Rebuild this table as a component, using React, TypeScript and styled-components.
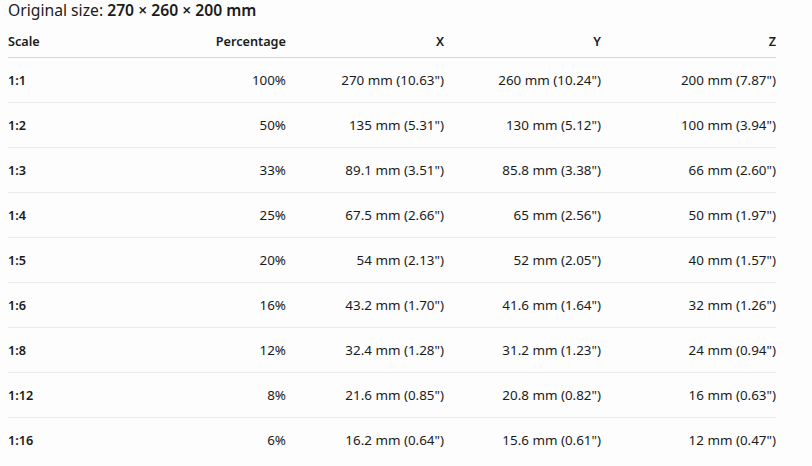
import React from "react";
import styled, { createGlobalStyle } from "styled-components";

const Global = createGlobalStyle`
  html, body { margin: 0; padding: 0; background: #fdfdfd; }
  body { font-family: "Noto Sans", "Open Sans", sans-serif; color: #1b1b1b; }
`;

const Page = styled.div`
  padding: 0 8px;
`;

const Title = styled.div`
  font-size: 15.7px;
  line-height: 20px;
  height: 20px;
`;

const Strong = styled.span`
  font-weight: 600;
`;

const Table = styled.table`
  width: 768px;
  table-layout: fixed;
  border-collapse: collapse;
  font-size: 13.4px;
  line-height: 20px;
`;

const Th = styled.th<{ $align?: "left" | "right"; $last?: boolean }>`
  font-size: 12.7px;
  font-weight: 600;
  text-align: ${(p) => p.$align ?? "right"};
  padding: 11px ${(p) => (p.$last || p.$align === "left" ? "0" : "16px")} 6px 0;
  border-bottom: 1px solid #d6d6d6;
  white-space: nowrap;
`;

const Tr = styled.tr`
  & + & td {
    border-top: 1px solid #ebebeb;
  }
`;

const Td = styled.td<{ $align?: "left" | "right"; $last?: boolean; $bold?: boolean }>`
  text-align: ${(p) => p.$align ?? "right"};
  font-weight: ${(p) => (p.$bold ? 600 : 400)};
  font-size: ${(p) => (p.$bold ? "12.7px" : "inherit")};
  padding: 12px ${(p) => (p.$last || p.$align === "left" ? "0" : "16px")} 12px 0;
  white-space: nowrap;
`;

const rows: [string, string, string, string, string][] = [
  ["1:1", "100%", '270 mm (10.63")', '260 mm (10.24")', '200 mm (7.87")'],
  ["1:2", "50%", '135 mm (5.31")', '130 mm (5.12")', '100 mm (3.94")'],
  ["1:3", "33%", '89.1 mm (3.51")', '85.8 mm (3.38")', '66 mm (2.60")'],
  ["1:4", "25%", '67.5 mm (2.66")', '65 mm (2.56")', '50 mm (1.97")'],
  ["1:5", "20%", '54 mm (2.13")', '52 mm (2.05")', '40 mm (1.57")'],
  ["1:6", "16%", '43.2 mm (1.70")', '41.6 mm (1.64")', '32 mm (1.26")'],
  ["1:8", "12%", '32.4 mm (1.28")', '31.2 mm (1.23")', '24 mm (0.94")'],
  ["1:12", "8%", '21.6 mm (0.85")', '20.8 mm (0.82")', '16 mm (0.63")'],
  ["1:16", "6%", '16.2 mm (0.64")', '15.6 mm (0.61")', '12 mm (0.47")'],
];

export default function App() {
  return (
    <Page>
      <Global />
      <Title>
        Original size: <Strong>270 × 260 × 200 mm</Strong>
      </Title>
      <Table>
        <colgroup>
          <col style={{ width: 142 }} />
          <col style={{ width: 152 }} />
          <col style={{ width: 158 }} />
          <col style={{ width: 157 }} />
          <col style={{ width: 159 }} />
        </colgroup>
        <thead>
          <tr>
            <Th $align="left">Scale</Th>
            <Th>Percentage</Th>
            <Th>X</Th>
            <Th>Y</Th>
            <Th $last>Z</Th>
          </tr>
        </thead>
        <tbody>
          {rows.map((r) => (
            <Tr key={r[0]}>
              <Td $align="left" $bold>{r[0]}</Td>
              <Td>{r[1]}</Td>
              <Td>{r[2]}</Td>
              <Td>{r[3]}</Td>
              <Td $last>{r[4]}</Td>
            </Tr>
          ))}
        </tbody>
      </Table>
    </Page>
  );
}
